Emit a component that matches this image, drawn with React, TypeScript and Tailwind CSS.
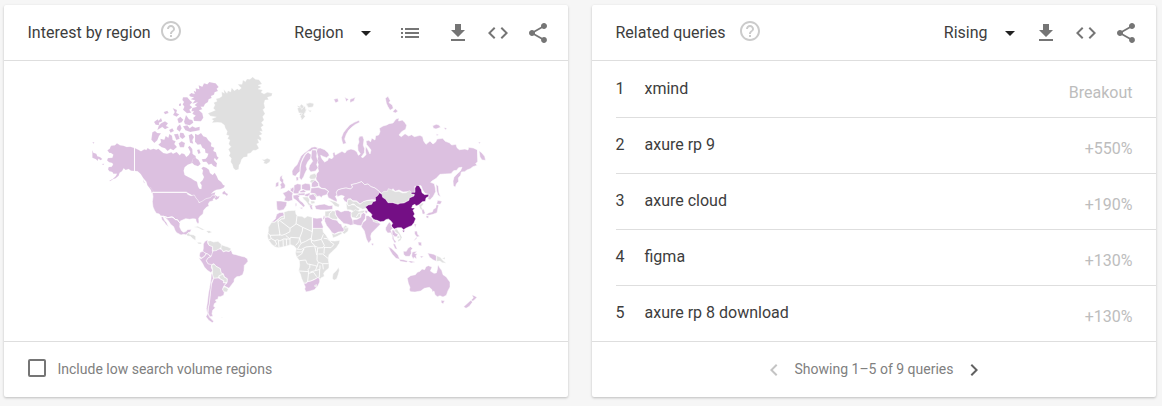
import React from "react";

const ICONS = {
  list: "M3 13h2v-2H3v2zm0 4h2v-2H3v2zm0-8h2V7H3v2zm4 4h14v-2H7v2zm0 4h14v-2H7v2zM7 7v2h14V7H7z",
  download: "M19 9h-4V3H9v6H5l7 7 7-7zM5 18v2h14v-2H5z",
  code: "M9.4 16.6L4.8 12l4.6-4.6L8 6l-6 6 6 6 1.4-1.4zm5.2 0l4.6-4.6-4.6-4.6L16 6l6 6-6 6-1.4-1.4z",
  share:
    "M18 16.08c-.76 0-1.44.3-1.96.77L8.91 12.7c.05-.23.09-.46.09-.7s-.04-.47-.09-.7l7.05-4.11c.54.5 1.25.81 2.04.81 1.66 0 3-1.34 3-3s-1.34-3-3-3-3 1.34-3 3c0 .24.04.47.09.7L8.04 9.81C7.5 9.31 6.79 9 6 9c-1.66 0-3 1.34-3 3s1.34 3 3 3c.79 0 1.5-.31 2.04-.81l7.12 4.16c-.05.21-.08.43-.08.65 0 1.61 1.31 2.92 2.92 2.92 1.61 0 2.92-1.31 2.92-2.92s-1.31-2.92-2.92-2.92z",
  help: "M11 18h2v-2h-2v2zm1-16C6.48 2 2 6.48 2 12s4.48 10 10 10 10-4.48 10-10S17.52 2 12 2zm0 18c-4.41 0-8-3.59-8-8s3.59-8 8-8 8 3.59 8 8-3.59 8-8 8zm0-14c-2.21 0-4 1.79-4 4h2c0-1.1.9-2 2-2s2 .9 2 2c0 2-3 1.75-3 5h2c0-2.25 3-2.5 3-5 0-2.21-1.79-4-4-4z",
  caret: "M7 10l5 5 5-5z",
  left: "M15.41 7.41L14 6l-6 6 6 6 1.41-1.41L10.83 12z",
  right: "M10 6L8.59 7.41 13.17 12l-4.58 4.59L10 18l6-6z",
};

function Icon({ name, className = "" }: { name: keyof typeof ICONS; className?: string }) {
  return (
    <svg viewBox="0 0 24 24" className={`h-6 w-6 shrink-0 fill-current ${className}`}>
      <path d={ICONS[name]} />
    </svg>
  );
}

const P = "#dcc0e0";
const G = "#e0e0e0";
const D = "#740f85";

type Sheet = { x: number; y: number; stroke: number; shapes: [string, string][]; lines?: string[] };

const SHEETS: Sheet[] = [
  {
    // Northern America
    x: 85,
    y: 70,
    stroke: 0.4,
    shapes: [
      [P, "M67,241 74,236 78,227 90,226 96,220 105,226 115,227 125,231 136,230 148,234 148,303 138,302 131,297 122,300 116,295 111,304 104,308 101,317 92,325 84,328 75,334 73,332 84,326 92,319 96,311 85,311 82,306 73,304 69,298 71,291 80,290 84,284 82,279 72,277 66,271 69,264 82,263 85,254 78,249 73,249Z"],
      [P, "M22,240 25,248 34,251 37,259 45,261 52,267 47,271 40,266 38,273 33,268 22,263Z M22,217 28,217 26,221Z M50,282 58,281 55,285Z"],
      [P, "M149,234 160,239 168,244 178,238 184,240 188,234 196,239 206,236 214,239 220,236 227,242 235,249 246,251 259,247 264,251 275,246 284,256 290,250 298,252 304,261 312,254 316,246 309,232 314,227 322,237 323,252 332,258 333,268 322,272 320,280 308,284 299,292 296,302 299,315 310,321 318,325 327,331 336,335 339,349 343,356 349,357 350,346 345,338 353,330 357,321 352,311 354,301 349,295 355,290 364,293 372,299 375,309 383,315 389,308 395,318 400,329 409,336 414,344 420,347 416,353 406,358 395,359 387,363 378,371 391,367 389,374 398,380 404,377 401,385 393,390 387,383 377,384 360,393 350,397 338,397 332,384 320,375 305,367 202,367 194,355 187,346 184,335 175,325 167,312 158,304 149,303Z"],
      [P, "M412,368 418,362 423,369 429,372 426,378 420,373 413,373Z"],
      [P, "M196,351 204,362 208,371 200,368Z M174,328 179,338 177,340Z"],
      // arctic archipelago
      [P, "M312,75 319,69 329,72 326,62 333,65 332,55 343,58 341,46 352,50 357,40 367,43 373,36 383,38 392,40 401,51 395,56 399,63 389,67 387,74 378,78 380,84 371,88 369,96 360,102 356,110 347,110 352,118 342,121 352,130 355,143 348,154 327,153 325,143 332,137 322,131 327,124 319,124 322,114 336,110 329,105 338,97 322,101 330,91 317,88 327,82 317,80Z"],
      [P, "M294,82 307,82 316,92 322,97 314,105 322,112 313,119 319,128 306,130 294,119 298,110 293,103 297,96 292,90Z"],
      [P, "M263,114 276,120 274,129 283,133 275,140 264,135 269,126Z M282,102 288,100 288,107 282,108Z"],
      [P, "M236,126 247,122 251,129 240,133Z"],
      [P, "M207,156 218,148 221,152 228,144 232,154 222,158 223,166 212,164Z"],
      [P, "M228,160 240,154 249,160 243,168 252,172 240,178 232,171 217,180 221,168Z"],
      [P, "M277,147 286,140 295,149 290,157 281,160Z"],
      [P, "M297,155 303,135 312,148 322,150 325,158 314,166 300,163Z"],
      [P, "M252,180 262,175 267,183 257,188Z"],
      [P, "M277,170 285,163 290,175 284,185 275,178Z"],
      [P, "M294,169 307,166 314,175 322,169 331,173 344,170 344,181 328,184 316,186 301,181Z"],
      [P, "M202,187 210,183 217,189 228,190 222,198 217,211 208,219 199,209Z"],
      [P, "M226,206 238,209 242,198 250,203 253,192 261,197 263,210 272,214 268,222 276,231 265,241 256,236 248,243 240,235 230,232 220,224 228,217Z"],
      [P, "M267,193 279,191 284,206 274,210Z"],
      [P, "M285,188 295,189 301,200 292,207 284,200Z"],
      [P, "M281,220 290,214 300,219 297,232 285,232Z"],
      [P, "M311,196 320,191 327,201 322,211 325,221 315,218Z"],
      [P, "M330,191 339,195 348,189 355,199 364,202 370,211 379,219 378,229 388,233 385,243 393,247 396,259 401,263 395,271 389,264 387,270 396,280 394,292 385,288 379,281 371,284 364,275 354,276 350,268 362,266 367,260 370,251 361,248 360,238 352,233 347,223 338,224 330,215Z"],
      [P, "M323,267 331,263 341,270 347,282 339,289 328,285 321,278Z M336,240 343,238 347,249 340,252Z"],
    ],
    lines: ["M148.5,233 148.5,304"],
  },
  {
    // North Atlantic
    x: 185,
    y: 70,
    stroke: 0.8,
    shapes: [
      [G, "M69,130 79,126 91,121 85,115 90,105 86,98 96,94 93,86 103,84 111,79 110,65 118,70 116,58 126,70 129,62 137,66 140,53 148,62 157,56 162,60 169,54 158,43 171,43 174,30 181,35 186,27 195,28 203,21 211,28 222,29 231,42 219,46 229,51 219,57 233,60 228,67 237,72 247,67 262,70 260,78 247,82 251,89 240,90 237,100 240,113 234,119 240,131 233,140 237,150 229,158 236,166 228,172 233,184 224,184 232,192 222,197 229,204 228,213 218,207 222,218 215,222 222,235 213,241 204,241 197,249 188,251 187,260 176,262 170,268 166,280 162,286 161,298 152,301 145,294 142,283 137,276 139,265 132,257 136,249 130,238 138,230 131,222 135,210 128,206 132,197 124,194 127,184 121,175 118,165 109,158 97,157 81,158 86,151 79,147 94,141 76,138Z"],
      [G, "M230,268 238,269 247,265 256,269 254,276 244,282 235,279 239,275Z"],
      [G, "M336,107 344,109 349,103 356,108 357,118 364,116 363,127 358,129 356,142 348,151 350,137 343,134 349,126 341,122 345,116Z"],
      [G, "M363,101 373,98 384,99 385,107 374,111 366,109Z"],
      [G, "M369,119 379,121 374,126Z"],
    ],
  },
  {
    // Middle and South America
    x: 145,
    y: 185,
    stroke: 1.6,
    shapes: [
      [P, "M22,22 125,22 128,28 138,32 148,30 153,39 159,46 162,53 171,49 183,41 196,38 203,30 210,31 212,37 204,43 205,47 194,50 190,57 192,63 184,67 176,76 174,87 166,93 161,100 162,112 159,117 154,110 152,102 143,101 134,103 122,101 113,105 106,108 105,114 101,110 97,104 91,104 87,99 81,96 68,98 56,94 47,93 43,87 34,85 29,77 24,66 22,50 24,35Z"],
      [P, "M56,94 68,98 81,96 87,99 91,104 97,104 101,110 105,114 104,126 110,138 116,142 124,139 127,134 139,133 136,141 129,143 124,150 116,148 108,150 95,143 90,136 86,125 77,118 70,107 62,99Z"],
      [P, "M48,94 54,95 59,106 65,113 71,126 62,118 57,110 51,104Z"],
      [G, "M124,148 132,143 134,148 146,150 152,154 152,167 142,160 136,154 127,153Z"],
      [G, "M151,165 157,172 168,172 170,177 160,177Z"],
      [G, "M147,126 158,124 173,131 180,135 171,135 160,129Z"],
      [G, "M183,138 193,137 202,142 191,145Z"],
      [P, "M175,177 180,169 188,165 188,175 192,181 203,185 202,196 204,206 198,214 190,208 183,205 173,200 175,190Z"],
      [G, "M188,169 196,167 206,171 219,169 229,178 230,186 222,193 209,200 203,196 203,185 192,181Z"],
      [G, "M229,179 239,183 249,186 259,191 253,199 243,197 235,200 228,190Z"],
      [P, "M165,202 174,199 183,206 178,214 169,219 163,213Z"],
      [P, "M161,218 169,221 179,214 184,206 190,208 196,215 190,218 184,227 189,236 200,237 199,248 203,256 198,263 187,256 178,246 172,234Z"],
      [P, "M204,198 213,197 222,192 229,193 235,201 243,198 252,200 258,195 263,207 273,209 286,213 299,216 307,221 309,229 303,236 298,241 297,257 293,269 284,274 275,275 268,282 267,290 260,299 252,310 236,302 246,294 247,281 238,275 235,266 228,264 226,251 212,243 207,236 199,239 189,236 184,227 190,218 198,215Z"],
      [G, "M200,241 207,237 213,244 226,251 228,263 234,268 222,272 220,279 206,280 202,269 203,256Z"],
      [G, "M222,272 235,268 237,276 246,281 246,292 236,293 237,287 224,281Z"],
      [P, "M206,280 220,279 229,284 236,288 235,294 244,293 236,304 233,313 238,321 236,331 226,335 220,335 219,342 211,345 215,351 208,356 206,364 211,368 203,376 201,386 204,394 194,395 189,384 190,368 193,353 195,336 197,315 199,299Z"],
      [G, "M236,306 243,307 250,313 246,321 236,320 233,313Z"],
      [P, "M199,263 203,271 205,280 200,291 198,310 195,333 193,355 189,371 188,385 194,397 206,409 202,413 191,406 183,395 187,387 184,371 187,353 190,327 195,300 198,282Z"],
      [G, "M228,397 234,396 231,399Z"],
    ],
    lines: ["M22,22 125,22", "M47,94 56,94 68,98 81,96 87,99 91,104 97,104 105,114"],
  },
  {
    // Russia, Central Asia and Europe
    x: 265,
    y: 85,
    stroke: 1.7,
    shapes: [
      [P, "M157,190 166,189 179,194 190,204 193,211 185,218 176,215 167,211 169,218 174,226 179,231 188,226 191,218 201,221 205,216 203,204 209,201 211,210 220,205 231,199 240,204 246,196 258,192 268,195 276,201 280,211 286,207 279,196 278,181 282,171 280,162 284,154 293,153 297,164 295,181 299,191 298,203 289,216 294,218 303,209 301,195 302,183 308,193 315,207 318,195 311,186 305,179 303,168 311,166 317,170 320,159 330,165 332,152 341,150 345,140 343,130 354,123 365,120 372,116 384,114 393,102 402,99 401,108 412,105 419,112 425,121 422,133 410,140 402,150 409,155 420,146 431,153 440,149 448,155 465,151 473,155 476,168 483,178 495,168 504,177 512,171 516,162 533,160 541,169 553,173 560,180 573,178 576,188 583,194 600,192 609,195 611,187 625,189 638,195 639,229 632,236 637,241 624,245 616,251 606,255 599,260 589,261 587,271 580,279 581,289 574,297 571,307 565,302 564,288 567,277 576,267 586,258 591,247 581,248 575,256 566,257 558,266 540,267 525,268 514,280 501,288 497,292 508,296 511,309 512,320 505,334 495,345 488,342 493,329 480,325 473,315 468,302 457,302 449,305 453,317 448,324 438,325 428,320 414,321 402,315 390,319 384,311 380,316 375,326 360,324 350,326 340,317 330,309 318,305 309,297 299,299 290,290 276,295 259,299 263,306 257,312 243,309 231,311 218,315 214,323 219,329 211,334 216,344 216,351 207,347 190,338 186,327 191,319 181,311 170,310 162,303 161,294 154,285 151,275 155,266 161,259 158,248 160,238 155,227 159,215 154,201Z"],
      [P, "M229,158 235,143 243,133 254,120 268,112 282,106 284,112 270,119 260,127 251,136 244,148 239,162 244,175 234,178 231,168Z"],
      [P, "M206,43 218,40 221,49 212,54Z M239,37 251,43 244,50Z M255,43 271,37 267,48 255,53Z"],
      [P, "M361,40 369,34 376,47 372,53 382,60 385,70 375,76 368,64 364,55Z"],
      [P, "M383,80 391,71 399,79 391,84Z"],
      [P, "M503,122 514,118 522,120 527,127 513,132 505,130Z M536,128 546,129 542,135Z M513,146 521,149 516,153Z"],
      [P, "M642,197 650,203 659,214 662,226 651,225 645,216Z M640,171 647,172 643,177Z"],
      [P, "M513,298 520,303 522,324 527,335 519,331 515,318Z"],
      // Kazakhstan and southern neighbours
      [P, "M214,323 218,315 231,311 243,309 257,312 263,306 259,299 276,295 290,290 299,299 309,297 318,305 330,309 340,317 350,326 341,333 335,345 321,344 308,346 297,350 285,357 275,348 263,347 257,341 249,342 247,353 239,349 234,341 238,334 229,331 217,335Z"],
      [G, "M247,353 249,343 257,343 264,349 274,349 285,358 295,350 305,347 321,346 334,348 322,356 308,362 305,370 293,373 285,369 274,364 267,357 261,357 257,363 247,360Z"],
      [G, "M243,353 251,363 261,359 269,360 276,367 285,372 279,379 270,382 258,375 246,374Z"],
      // Nordics
      [P, "M82,270 81,258 88,247 96,239 101,228 108,213 118,204 130,195 140,187 150,185 158,188 155,194 145,193 137,199 128,200 119,209 113,220 108,233 105,247 106,259 99,264 91,274Z"],
      [P, "M105,262 106,247 109,233 115,220 121,209 129,202 139,209 137,220 128,231 123,243 126,253 120,265 116,275 109,286 103,278Z"],
      [P, "M140,195 153,195 156,204 155,215 159,227 155,239 159,248 152,258 137,261 131,252 134,241 143,229 138,219Z"],
      [P, "M93,276 100,276 100,286 94,288Z"],
      [G, "M136,269 150,265 155,273 151,282 137,283 132,277Z"],
      [G, "M138,284 150,283 151,292 142,295 134,291Z"],
      [G, "M97,70 106,65 110,73 120,62 123,76 117,89 121,94 112,105 106,95 112,85 101,84Z M124,57 135,53 147,56 144,66 130,68Z M132,76 140,77 136,82Z"],
      // British Isles
      [P, "M45,275 52,271 51,280 56,285 55,292 61,300 60,309 46,313 48,305 45,299 50,293 44,286Z"],
      [P, "M33,293 41,290 41,303 31,307Z"],
      // Western Europe
      [P, "M53,324 63,320 71,315 84,324 82,332 83,346 71,349 57,347 61,336Z"],
      [P, "M34,348 48,348 66,351 64,362 56,374 43,377 36,374Z"],
      [P, "M79,310 86,305 88,315 84,323 75,316Z"],
      [P, "M87,301 97,296 108,298 108,313 101,321 103,326 87,326 84,321 87,315Z"],
      [P, "M110,299 121,295 135,297 137,309 136,317 125,317 110,313Z"],
      [P, "M140,294 150,285 160,295 161,304 148,307 139,306Z"],
      [P, "M137,319 138,309 160,307 171,311 180,312 190,319 185,329 172,333 170,338 163,333 154,335 148,326 135,324Z"],
      [P, "M104,319 115,314 124,319 118,323 106,323Z"],
      [P, "M103,325 120,324 120,331 103,331 94,330Z"],
      [P, "M84,331 96,329 106,332 101,337 104,346 114,353 120,362 116,367 105,356 94,346 85,340Z M103,368 113,367 112,373Z M91,355 95,355 95,363 91,364Z"],
      [P, "M120,328 134,323 136,328 128,335 119,334Z"],
      [P, "M132,331 146,326 153,335 153,345 140,346 132,339Z"],
      [G, "M112,336 129,336 134,345 132,354 140,357 137,364 130,360 124,350 115,342Z"],
      [G, "M136,348 149,348 150,355 139,357Z M145,326 151,326 156,335 152,336Z"],
      [P, "M133,361 143,359 141,365 144,374 137,373Z"],
      [P, "M149,362 163,359 178,357 192,362 203,361 203,373 186,375 167,375 153,373Z"],
      [G, "M190,345 210,350 224,359 221,367 209,363 204,356Z"],
    ],
    lines: ["M638,194 639,230"],
  },
  {
    // Africa and the Middle East
    x: 260,
    y: 180,
    stroke: 1.6,
    shapes: [
      [P, "M35,126 46,117 50,103 58,98 70,97 73,107 62,111 53,119 43,126Z"],
      [G, "M35,127 44,127 54,119 63,111 73,107 72,96 85,92 106,91 108,102 112,108 126,109 134,114 143,108 157,112 158,145 188,145 190,157 197,164 203,174 210,182 224,183 240,181 238,190 229,203 216,215 207,224 205,237 207,253 207,264 196,273 191,280 193,289 183,294 180,299 176,291 163,298 151,303 142,304 139,309 131,309 125,296 121,282 116,273 119,256 118,242 109,229 106,219 109,206 102,198 92,194 80,198 67,201 54,203 44,200 34,192 25,179 22,168 25,153 25,142Z"],
      [P, "M158,113 171,115 185,113 188,121 184,126 190,141 188,145 158,145Z"],
      [P, "M131,310 139,310 143,305 151,304 163,299 175,292 179,299 179,306 173,319 163,329 151,333 138,336 134,327 136,321Z"],
      [G, "M164,316 170,314 171,320 165,321Z"],
      [G, "M236,262 238,271 235,283 230,297 222,301 217,295 219,281 228,273Z"],
      [P, "M194,124 194,112 204,111 217,118 231,121 237,130 244,133 247,142 254,145 251,155 235,156 224,162 216,158 209,148 200,137Z"],
      [G, "M215,160 225,163 236,158 244,156 246,161 232,169 219,174Z M250,142 256,136 266,143 264,154 253,162 247,158 253,152Z"],
      [G, "M195,94 214,92 226,93 226,104 233,113 231,119 217,117 205,110 195,111Z"],
      [P, "M225,91 234,90 243,96 254,92 265,92 274,97 273,110 278,120 284,133 272,136 261,132 252,131 243,122 235,115 228,105Z"],
      [G, "M273,99 286,89 297,94 312,91 315,96 302,102 301,112 291,115 275,112Z"],
      [P, "M279,119 291,118 302,112 304,102 311,98 317,103 316,115 309,125 305,137 293,136 279,132Z"],
      [P, "M304,140 308,128 318,120 318,107 325,107 335,113 339,121 354,127 362,132 350,144 335,159 332,168 334,179 326,190 319,177 313,153Z"],
      [P, "M335,189 341,191 339,197 335,194Z"],
      [P, "M190,110 192,106 195,111 191,121 189,115Z"],
      [P, "M314,91 323,92 321,101 316,99Z"],
    ],
    lines: [
      "M73,107 73,116 63,117 54,126 54,119 M60,122 90,145 108,132 111,108 M54,126 60,165 30,166 25,160",
      "M108,131 128,142 157,155 157,112 M157,155 153,180 M90,145 90,155 77,162 66,166 57,164",
      "M128,142 127,153 119,174 92,172 90,177 77,166 M157,155 158,145",
      "M30,166 34,176 45,182 52,179 60,183 70,177 90,177 M34,176 25,180 M45,182 50,192 44,198 M55,181 57,201 M69,178 70,200 M79,177 80,197 M90,177 90,195",
      "M119,174 116,186 107,196 M119,174 123,190 112,208 M123,190 137,184 153,175 155,188 164,196",
      "M112,208 124,208 138,201 164,198 173,202 M109,216 125,216 132,207 M112,230 125,222 132,206",
      "M118,242 137,240 142,252 150,253 149,263 144,269 146,275 117,273 M149,253 163,256 172,259",
      "M154,180 162,183 184,178 190,163 M184,178 193,196 189,203 173,204 172,216 M191,175 202,176 210,184 222,193 213,203 192,202",
      "M175,222 188,222 204,235 M172,214 171,240 175,247 171,260 166,272 151,276",
      "M175,247 188,251 206,251 M146,275 143,304 M146,280 160,276 170,290 M166,272 180,268 180,256 M179,269 178,292 M188,252 190,268",
      "M164,197 170,225 M193,201 192,221",
      "M207,111 208,101 216,94 M266,143 254,144",
      "M289,111 296,100 305,99",
    ],
  },
  {
    // East Asia and Oceania
    x: 360,
    y: 180,
    stroke: 1.4,
    shapes: [
      [G, "M63,41 72,34 82,34 85,26 96,30 106,35 117,34 127,39 138,38 148,32 154,36 153,42 163,43 162,48 148,54 147,61 132,69 120,70 114,73 98,68 84,68 76,58 67,51Z"],
      [D, "M16,81 25,75 35,73 39,65 47,63 46,52 54,46 58,38 66,43 68,52 77,58 84,68 98,68 114,73 120,70 132,69 147,61 148,54 162,48 163,43 153,42 155,37 165,37 165,24 170,16 177,17 184,29 186,38 194,44 206,43 206,49 198,54 196,64 187,65 177,74 168,78 165,73 158,76 155,84 165,84 159,91 164,102 160,108 167,116 162,128 155,137 147,140 137,145 131,149 124,143 113,143 103,147 97,142 94,137 98,130 92,122 85,117 77,119 72,124 61,125 51,121 42,119 34,110 36,104 31,98 25,94 21,87Z"],
      [D, "M127,152 133,151 132,157Z"],
      [G, "M177,76 187,69 191,71 184,80 188,87 184,91 179,84Z"],
      [P, "M185,88 191,88 195,98 193,103 187,101Z"],
      [P, "M197,104 207,98 217,96 220,88 227,84 229,74 236,75 233,88 231,98 219,103 207,106Z M230,72 233,61 246,64 241,73Z M198,107 206,107 205,115 199,113Z"],
      [P, "M162,132 169,132 166,143Z"],
      [G, "M41,119 53,124 59,127 52,129 39,124Z"],
      [P, "M77,143 83,133 88,126 93,132 94,140 99,145 92,151 97,162 97,168 92,158 83,159 77,150Z"],
      [P, "M96,150 103,151 106,159 114,163 111,170 104,170 100,165 102,178 109,186 104,189 97,176 97,164Z"],
      [G, "M103,148 111,147 116,155 122,164 126,172 122,181 114,185 114,180 121,175 117,163 110,159 106,155Z M112,168 119,169 119,174 111,175Z"],
      [P, "M164,154 171,153 173,163 179,169 171,171 164,162Z M174,186 184,187 185,198 176,196Z M160,184 170,170 170,176Z"],
      [P, "M85,200 94,205 105,215 114,225 119,238 108,235 97,223 91,213Z M99,191 105,192 112,208 105,206Z"],
      [P, "M117,238 130,239 144,243 139,247 121,244Z M144,243 153,243 166,246 153,249Z"],
      [P, "M130,214 139,214 144,205 151,200 158,205 153,211 154,220 149,229 137,229 131,223Z"],
      [P, "M157,216 171,214 164,221 172,221 168,227 170,237 162,232 160,238 155,228Z"],
      [P, "M203,219 213,221 221,223 229,227 229,244 219,239 209,232Z M180,228 191,229 184,234Z"],
      [G, "M230,227 241,232 248,241 259,250 247,248 240,243 230,244Z M246,236 255,231 255,238Z"],
      [P, "M142,295 152,287 166,284 172,277 180,274 186,267 194,269 198,260 205,257 216,261 211,273 222,280 229,279 232,269 234,254 240,265 245,271 249,284 259,291 265,300 270,306 270,321 264,332 259,346 249,351 240,347 232,350 225,344 222,333 217,336 216,329 208,322 193,325 182,333 165,336 152,335 148,330 150,322 145,310Z"],
      [P, "M243,361 254,362 249,372 244,367Z"],
      [P, "M336,344 344,348 351,352 344,359 338,364 334,359 340,354Z M334,360 337,367 328,379 318,385 311,380 321,371 329,364Z"],
    ],
  },
];

function toPath(d: string) {
  return d
    .split("M")
    .filter((s) => s.trim())
    .map((s) => "M" + s.trim().replace(/ (?=\d)/g, " L"))
    .join(" ");
}

function WorldMap() {
  return (
    <svg viewBox="4 61 564 280" className="h-[280px] w-[564px]" aria-label="Interest by region map">
      {SHEETS.map((s) => (
        <g key={`${s.x}-${s.y}`} transform={`translate(${s.x} ${s.y}) scale(0.33333)`} strokeLinejoin="round">
          {s.shapes.map(([fill, d]) => (
            <path key={d} d={toPath(d)} fill={fill} stroke="#fff" strokeWidth={s.stroke} />
          ))}
          {s.lines?.map((d) => (
            <path key={d} d={toPath(d)} fill="none" stroke="#fff" strokeWidth="2.6" />
          ))}
        </g>
      ))}
    </svg>
  );
}

const QUERIES = [
  ["xmind", "Breakout"],
  ["axure rp 9", "+550%"],
  ["axure cloud", "+190%"],
  ["figma", "+130%"],
  ["axure rp 8 download", "+130%"],
];

function Card({ children }: { children: React.ReactNode }) {
  return (
    <section className="flex h-[392px] w-[564px] shrink-0 flex-col rounded-xs bg-white shadow-[0_1px_3px_rgba(0,0,0,0.16),0_1px_2px_rgba(0,0,0,0.08)]">
      {children}
    </section>
  );
}

function Header({ title, select, list }: { title: string; select: string; list?: boolean }) {
  return (
    <header className="flex h-14 shrink-0 items-center border-b border-[#dedede] pr-[18.5px] pl-[23.5px]">
      <h2>{title}</h2>
      <Icon name="help" className={`mb-[3px] text-[#cbcbcb] ${list ? "ml-2" : "ml-3"}`} />
      <div className="ml-auto flex items-center text-[#757575]">
        <span className="text-[#3d3d3d]">{select}</span>
        <Icon name="caret" className="ml-2.5 text-[#212121]" />
        {list && <Icon name="list" className="mr-3 ml-5" />}
        <Icon name="download" className="ml-3" />
        <Icon name="code" className="ml-4" />
        <Icon name="share" className="ml-4" />
      </div>
    </header>
  );
}

export default function App() {
  return (
    <main className="flex h-[406px] w-[1162px] gap-6 overflow-hidden bg-[#f6f6f6] pt-[5px] pl-1 font-['Roboto',sans-serif] text-base text-[#3d3d3d]">
      <Card>
        <Header title="Interest by region" select="Region" list />
        <WorldMap />
        <footer className="flex flex-1 items-center border-t border-[#dedede] pl-6 text-sm text-[#808080]">
          <span className="mb-[3px] h-[18px] w-[18px] rounded-xs border-2 border-[#757575]" />
          <span className="mb-0.5 ml-[11.5px]">Include low search volume regions</span>
        </footer>
      </Card>
      <Card>
        <Header title="Related queries" select="Rising" />
        <ol className="flex h-[280px] flex-col pt-px pl-[23.5px]">
          {QUERIES.map(([q, v], i) => (
            <li
              key={q}
              className="flex h-14 shrink-0 items-center border-b border-[#dedede] pr-[23.5px] pb-0.5 last:h-[55px] last:border-b-0"
            >
              <span className="w-[29px]">{i + 1}</span>
              <span>{q}</span>
              <span className="mt-2 ml-auto text-[#bdbdbd]">{v}</span>
            </li>
          ))}
        </ol>
        <footer className="flex flex-1 items-center justify-center border-t border-[#dedede] text-sm text-[#808080]">
          <Icon name="left" className="mr-[9px] text-[#c4c4c4]" />
          <span className="mb-0.5">Showing 1–5 of 9 queries</span>
          <Icon name="right" className="ml-[9px] text-[#616161]" />
        </footer>
      </Card>
    </main>
  );
}
